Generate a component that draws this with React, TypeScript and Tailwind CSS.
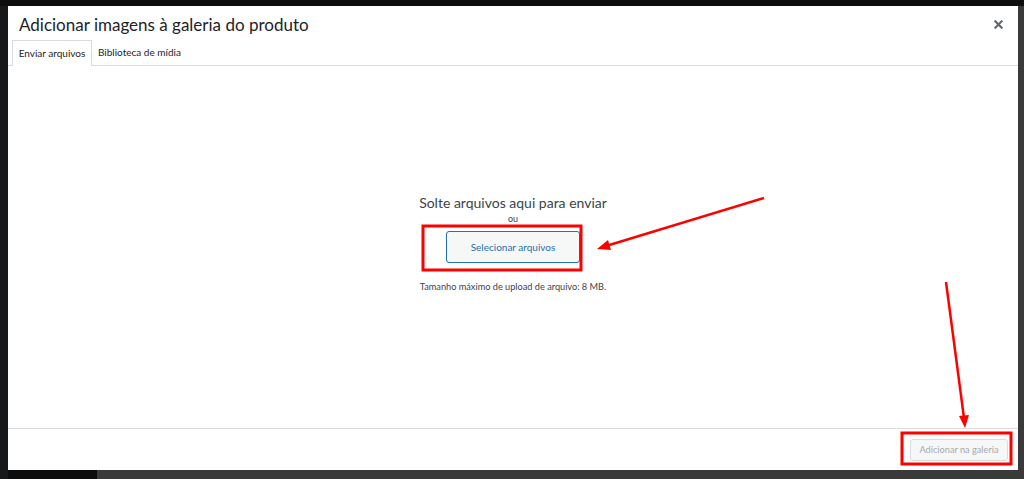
import React from "react";

const font = { fontFamily: 'Lato, "Noto Sans", sans-serif' };

function Annotations() {
    return (
        <svg className="absolute inset-0 pointer-events-none" width={1024} height={479} viewBox="0 0 1024 479">
            {/* box around the upload button */}
            <rect x={423} y={226} width={158} height={44} fill="none" stroke="#ff0000" strokeWidth={3} />
            {/* box around the footer button */}
            <rect x={902} y={433} width={109} height={31} fill="none" stroke="#ff0000" strokeWidth={3} />
            {/* arrow to upload button */}
            <line x1={764} y1={198} x2={606} y2={246} stroke="#ff0000" strokeWidth={2.5} />
            <polygon points="597,249 608,240 611,250" fill="#ff0000" />
            {/* arrow down to footer button */}
            <line x1={946} y1={282} x2={964} y2={418} stroke="#ff0000" strokeWidth={2.5} />
            <polygon points="965,428 959,416 969,415" fill="#ff0000" />
        </svg>
    );
}

export default function App() {
    return (
        <div className="relative w-[1024px] h-[479px] overflow-hidden bg-[#0d0d0d]" style={font}>
            {/* backdrop strips */}
            <div className="absolute right-0 top-[6px] w-[6px] h-[473px] bg-[#3a3a3a]" />
            <div className="absolute left-[97px] bottom-0 right-0 h-[9px] bg-[#3a3a3a]" />
            <div className="absolute left-0 top-[6px] w-[8px] h-[473px] bg-[#16181a]" />

            <div className="relative ml-[8px] mt-[6px] w-[1010px] h-[464px] bg-white flex flex-col">
                {/* Header */}
                <div className="h-[34px] flex items-center justify-between pl-[11px] pr-[15px]">
                    <h1 className="text-[17px] text-[#1d2327] leading-none pt-[2px]">
                        Adicionar imagens à galeria do produto
                    </h1>
                    <svg width="9" height="9" viewBox="0 0 10 10" className="mt-[3px]">
                        <path d="M1.5 1.5 L8.5 8.5 M8.5 1.5 L1.5 8.5" stroke="#646970" strokeWidth="2.4" strokeLinecap="square" />
                    </svg>
                </div>

                {/* Tabs */}
                <div className="h-[26px] flex items-end pl-[4px] border-b border-[#dcdcde]">
                    <div className="h-[26px] w-[80px] flex items-center justify-center text-[10px] text-[#1d2327] bg-white border border-b-0 border-[#dcdcde] -mb-px">
                        Enviar arquivos
                    </div>
                    <div className="h-[25px] pl-[6px] flex items-center text-[10px] text-[#1d2327]">
                        Biblioteca de mídia
                    </div>
                </div>

                {/* Drop area */}
                <div className="flex-1 flex flex-col items-center pt-[127px]">
                    <p className="text-[14px] text-[#3c434a] leading-[19px]">Solte arquivos aqui para enviar</p>
                    <p className="mt-[1px] text-[9px] text-[#3c434a] leading-[12px]">ou</p>
                    <button className="mt-[6px] w-[134px] h-[32px] bg-[#f6f7f7] border border-[#2271b1] rounded-[3px] text-[10px] text-[#2271b1]">
                        Selecionar arquivos
                    </button>
                    <p className="mt-[17px] text-[9.2px] text-[#3c434a]">Tamanho máximo de upload de arquivo: 8 MB.</p>
                </div>

                {/* Footer */}
                <div className="h-[42px] border-t border-[#dcdcde] flex items-center justify-end pr-[10px]">
                    <button className="w-[98px] h-[22px] bg-[#f6f7f7] border border-[#dcdcde] rounded-[3px] text-[9.2px] text-[#a7aaad]">
                        Adicionar na galeria
                    </button>
                </div>
            </div>

            <Annotations />
        </div>
    );
}
